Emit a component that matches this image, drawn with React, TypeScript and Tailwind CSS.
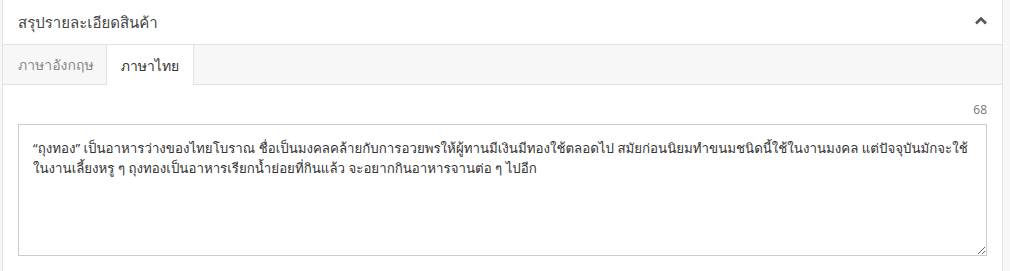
import React from 'react';

const description =
  '“ถุงทอง” เป็นอาหารว่างของไทยโบราณ ชื่อเป็นมงคลคล้ายกับการอวยพรให้ผู้ทานมีเงินมีทองใช้ตลอดไป สมัยก่อนนิยมทำขนมชนิดนี้ใช้ในงานมงคล แต่ปัจจุบันมักจะใช้ในงานเลี้ยงหรู ๆ ถุงทองเป็นอาหารเรียกน้ำย่อยที่กินแล้ว จะอยากกินอาหารจานต่อ ๆ ไปอีก';

export default function App() {
  return (
    <div className="min-h-[271px] w-[1010px] bg-[#f7f7f7] pl-[2px] pr-[7px] font-['Open_Sans','Loma',sans-serif]">
      <div className="border-x border-[#e3e3e3] bg-white">
        {/* Header */}
        <div className="flex h-[45px] items-center justify-between border-b border-[#e3e3e3] pl-[15px] pr-[15px]">
          <h3 className="text-[15px] text-[#444]">สรุปรายละเอียดสินค้า</h3>
          <svg width="12" height="8" viewBox="0 0 12 8" className="mb-[3px]">
            <path d="M1 6.5 L6 1.5 L11 6.5" fill="none" stroke="#555" strokeWidth="2.6" />
          </svg>
        </div>

        {/* Tabs */}
        <div className="flex h-[40px] border-b border-[#e3e3e3] bg-[#f7f7f7]">
          <div className="flex w-[103px] items-center pl-[15px] text-[14px] text-[#888]">ภาษาอังกฤษ</div>
          <div className="-mb-px flex w-[88px] items-center justify-center border-x border-[#e3e3e3] bg-white text-[14px] text-[#333]">
            ภาษาไทย
          </div>
        </div>

        {/* Body */}
        <div className="px-[15px] pb-[15px] pt-[16px]">
          <div className="mb-[6px] text-right text-[12px] leading-[17px] text-[#777]">68</div>
          <textarea
            className="block h-[132px] w-full resize-y border border-[#cccccc] px-[14px] py-[13px] font-['Open_Sans','Loma',sans-serif] text-[13.3px] leading-[20px] text-[#333] outline-none"
            defaultValue={description}
          />
        </div>
      </div>
    </div>
  );
}
